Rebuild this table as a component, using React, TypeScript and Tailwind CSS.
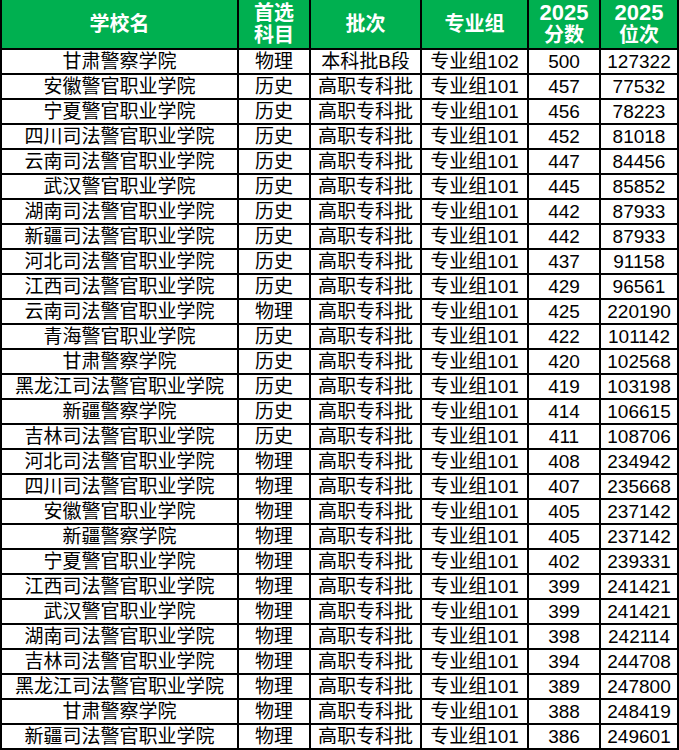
import React from "react";

const rows: [string, string, string, string, string, string][] = [
  ["甘肃警察学院", "物理", "本科批B段", "专业组102", "500", "127322"],
  ["安徽警官职业学院", "历史", "高职专科批", "专业组101", "457", "77532"],
  ["宁夏警官职业学院", "历史", "高职专科批", "专业组101", "456", "78223"],
  ["四川司法警官职业学院", "历史", "高职专科批", "专业组101", "452", "81018"],
  ["云南司法警官职业学院", "历史", "高职专科批", "专业组101", "447", "84456"],
  ["武汉警官职业学院", "历史", "高职专科批", "专业组101", "445", "85852"],
  ["湖南司法警官职业学院", "历史", "高职专科批", "专业组101", "442", "87933"],
  ["新疆司法警官职业学院", "历史", "高职专科批", "专业组101", "442", "87933"],
  ["河北司法警官职业学院", "历史", "高职专科批", "专业组101", "437", "91158"],
  ["江西司法警官职业学院", "历史", "高职专科批", "专业组101", "429", "96561"],
  ["云南司法警官职业学院", "物理", "高职专科批", "专业组101", "425", "220190"],
  ["青海警官职业学院", "历史", "高职专科批", "专业组101", "422", "101142"],
  ["甘肃警察学院", "历史", "高职专科批", "专业组101", "420", "102568"],
  ["黑龙江司法警官职业学院", "历史", "高职专科批", "专业组101", "419", "103198"],
  ["新疆警察学院", "历史", "高职专科批", "专业组101", "414", "106615"],
  ["吉林司法警官职业学院", "历史", "高职专科批", "专业组101", "411", "108706"],
  ["河北司法警官职业学院", "物理", "高职专科批", "专业组101", "408", "234942"],
  ["四川司法警官职业学院", "物理", "高职专科批", "专业组101", "407", "235668"],
  ["安徽警官职业学院", "物理", "高职专科批", "专业组101", "405", "237142"],
  ["新疆警察学院", "物理", "高职专科批", "专业组101", "405", "237142"],
  ["宁夏警官职业学院", "物理", "高职专科批", "专业组101", "402", "239331"],
  ["江西司法警官职业学院", "物理", "高职专科批", "专业组101", "399", "241421"],
  ["武汉警官职业学院", "物理", "高职专科批", "专业组101", "399", "241421"],
  ["湖南司法警官职业学院", "物理", "高职专科批", "专业组101", "398", "242114"],
  ["吉林司法警官职业学院", "物理", "高职专科批", "专业组101", "394", "244708"],
  ["黑龙江司法警官职业学院", "物理", "高职专科批", "专业组101", "389", "247800"],
  ["甘肃警察学院", "物理", "高职专科批", "专业组101", "388", "248419"],
  ["新疆司法警官职业学院", "物理", "高职专科批", "专业组101", "386", "249601"],
];

const font = { fontFamily: '"Liberation Sans", "Noto Sans CJK SC", sans-serif' };

function H({ children }: { children: React.ReactNode }) {
  return (
    <div className="bg-[#00b050] text-white font-bold text-[20px] leading-[22px] flex flex-col items-center justify-center text-center">
      {children}
    </div>
  );
}

export default function App() {
  return (
    <div className="w-[679px] h-[750px] bg-white" style={font}>
      <div className="grid grid-cols-[235px_70px_109px_105px_70px_76px] grid-rows-[48px] auto-rows-[23px] gap-[2px] bg-black px-[2px] pb-[2px]">
        <H>学校名</H>
        <H>
          <span>首选</span>
          <span>科目</span>
        </H>
        <H>批次</H>
        <H>专业组</H>
        <H>
          <span className="text-[22px]">2025</span>
          <span>分数</span>
        </H>
        <H>
          <span className="text-[22px]">2025</span>
          <span>位次</span>
        </H>
        {rows.map((r, i) =>
          r.map((c, j) => (
            <div
              key={`${i}-${j}`}
              className="bg-white text-black text-[19px] leading-[23px] flex items-center justify-center whitespace-nowrap overflow-hidden"
            >
              {c}
            </div>
          ))
        )}
      </div>
    </div>
  );
}
